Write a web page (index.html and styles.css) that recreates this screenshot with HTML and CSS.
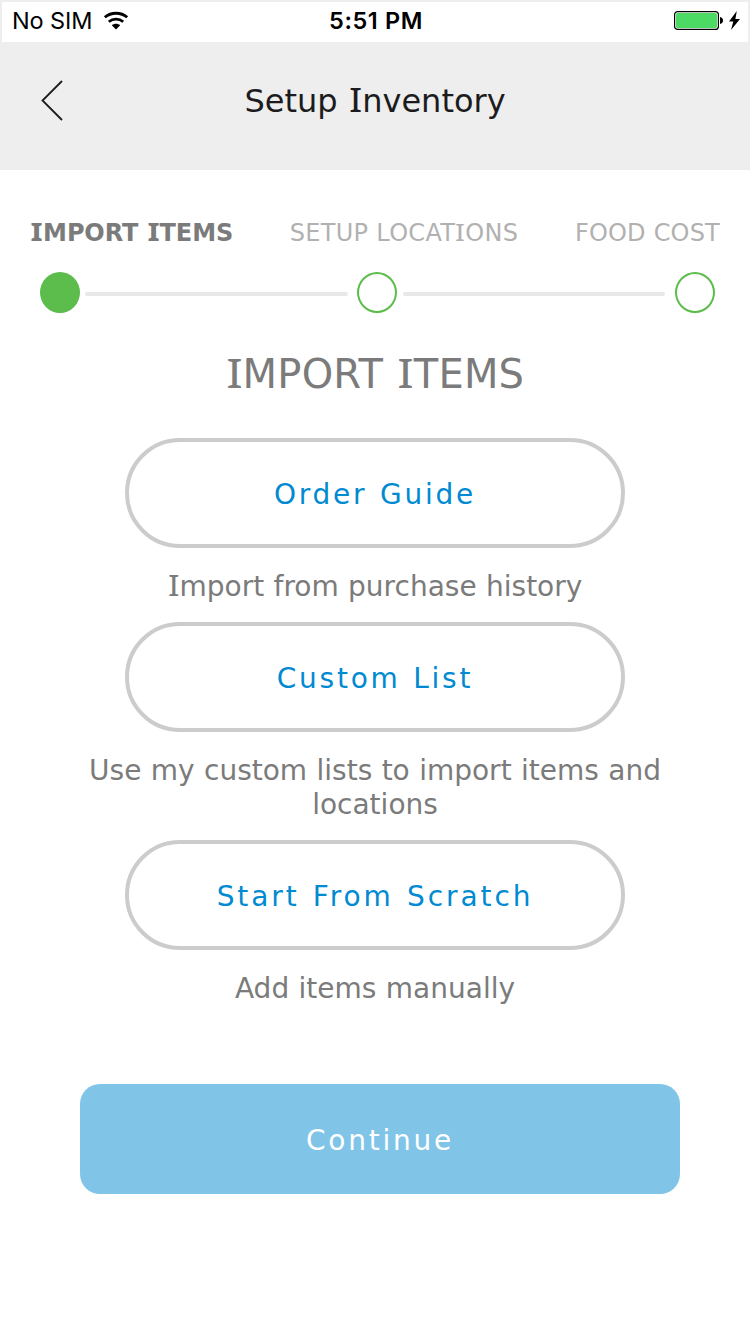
FILE: index.html
```html
<!DOCTYPE html>
<html lang="en">
<head>
<meta charset="utf-8">
<title>Setup Inventory</title>
<link rel="stylesheet" href="styles.css">
</head>
<body>
<div class="status">
  <div class="carrier"><span>No SIM</span>
    <svg width="26" height="20" viewBox="0 0 26 20"><path d="M1.800 6.300C8.200.9 17.800.9 24.200 6.300" fill="none" stroke="#000" stroke-width="2.800"/><path d="M5.800 10.800c4.200-3.500 10.200-3.500 14.400 0" fill="none" stroke="#000" stroke-width="2.700"/><path d="M8.800 14.200c2.500-2 5.900-2 8.400 0L13 18.600z"/></svg>
  </div>
  <div class="clock">5:51 PM</div>
  <div class="power">
    <svg width="66" height="20" viewBox="0 0 66 20"><rect x=".6" y=".6" width="43.800" height="17.800" rx="3" fill="#fff" stroke="#000" stroke-width="1.200"/><rect x="2" y="2" width="41" height="15" rx="1.600" fill="#4cd964"/><path d="M46 6c4 .5 4 6.500 0 7z"/><path d="M62.800 0 55 10.500h4.300L57 19l9-11h-4.600z"/></svg>
  </div>
</div>
<header class="nav">
  <svg class="back" width="24" height="42" viewBox="0 0 24 42"><path d="M22 1 2.500 20.500 22 40" fill="none" stroke="#1c1c20" stroke-width="1.800"/></svg>
  <h1>Setup <span class="i">I</span>nventory</h1>
</header>
<main>
  <div class="labels"><span class="current"><span class="i">I</span>MPORT <span class="i">I</span>TEMS</span><span class="locations">SETUP LOCAT<span class="i">I</span>ONS</span><span class="cost">FOOD COST</span></div>
  <div class="track"><i class="dot filled"></i><i class="line"></i><i class="dot"></i><i class="line"></i><i class="dot"></i></div>
  <h2><span class="i">I</span>MPORT <span class="i">I</span>TEMS</h2>
  <div class="options">
    <button class="pill">Order Guide</button>
    <p><span class="i">I</span>mport from purchase history</p>
    <button class="pill">Custom List</button>
    <p>Use my custom lists to import items and locations</p>
    <button class="pill scratch">Start From Scratch</button>
    <p>Add items manually</p>
  </div>
  <button class="continue">Continue</button>
</main>
</body>
</html>
```
FILE: styles.css
```css
* { box-sizing: border-box; }
body { margin: 0; height: 1334px; background: #fff; color: #7b7b7b; font-family: Verdana, "DejaVu Sans", sans-serif; }
/* Serifed capital I, set on a wider advance */
.i { display: inline-block; width: .421em; text-align: center; font-family: "Noto Sans", sans-serif; line-height: 1; letter-spacing: 0; transform: scale(1.22, 1.02); }
.status { display: grid; grid-template-columns: 1fr auto 1fr; align-items: center; height: 42px; border: 2px solid #eee; border-bottom: 0; padding: 0 8px 2px 10px; color: #000; font: 24px/36px Inter, sans-serif; }
.carrier { display: flex; align-items: center; gap: 11px; font-size: 23.5px; letter-spacing: -.1px; }
.clock { font-weight: 600; font-size: 23.5px; letter-spacing: .6px; }
.power { display: flex; justify-content: flex-end; }
.nav { display: grid; grid-template-columns: 100px 1fr 100px; align-items: center; height: 128px; padding-bottom: 10px; background: #eee; color: #1c1c20; }
.back { margin-left: 40px; }
h1 { margin: 0; text-align: center; font-size: 32px; font-weight: 400; line-height: 40px; word-spacing: 1px; }
main { display: flex; flex-direction: column; }
.labels { display: flex; justify-content: space-between; padding: 48px 30px 0; font-size: 24px; line-height: 30px; color: #b1b1b1; white-space: nowrap; }
.labels .current { font-weight: 700; color: #7b7b7b; letter-spacing: -.1px; }
.current .i { width: .546em; transform: scale(1.3, 1.02); }
.locations { letter-spacing: .3px; }
.cost { letter-spacing: .2px; }
.track { display: flex; align-items: center; padding: 24px 35px 0 40px; }
.dot { flex: none; width: 40px; height: 41px; border: 2px solid #5cbc4c; border-radius: 50%; }
.filled { background: #5cbc4c; }
.line { flex: 1; height: 4px; margin: 3px 9px 0 5px; border-radius: 2px; background: #e8e8e8; }
.dot + .line:nth-child(4) { margin-left: 6px; margin-right: 10px; }
h2 { margin: 37px 0 0; text-align: center; font-size: 40px; font-weight: 400; line-height: 48px; letter-spacing: .2px; word-spacing: 1px; }
.options { display: flex; flex-direction: column; align-items: center; padding: 40px 75px 0; }
button { height: 110px; padding: 2px 0 0; font-family: inherit; font-size: 28px; letter-spacing: 2.75px; word-spacing: 1px; }
.pill { width: 500px; border: 4px solid #ccc; border-radius: 55px; background: #fff; color: #008ad2; }
.scratch { letter-spacing: 2.9px; word-spacing: 1.5px; }
.options p { margin: 22px 0 18px; text-align: center; font-size: 28px; line-height: 34px; word-spacing: .5px; }
.continue { width: 600px; margin: 60px 0 0 80px; border: 0; border-radius: 20px; background: #80c4e8; color: #fff; }
```
